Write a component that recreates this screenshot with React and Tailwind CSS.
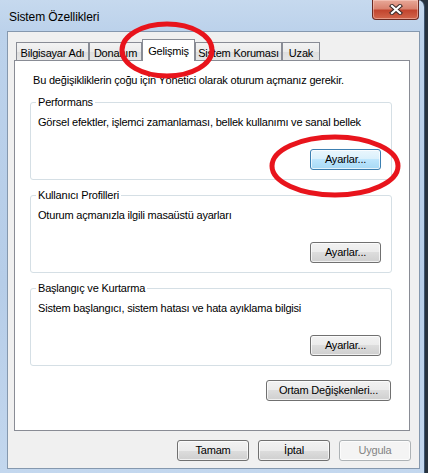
import { useState } from "react";

const tabs = [
  { label: "Bilgisayar Adı", width: "w-[73px]" },
  { label: "Donanım", width: "w-[53px]" },
  { label: "Gelişmiş", width: "w-[53px]", active: true },
  { label: "Sistem Koruması", width: "w-[87px]" },
  { label: "Uzak", width: "w-[38px]" },
];

const groups = [
  { title: "Performans", text: "Görsel efektler, işlemci zamanlaması, bellek kullanımı ve sanal bellek", focused: true },
  { title: "Kullanıcı Profilleri", text: "Oturum açmanızla ilgili masaüstü ayarları" },
  { title: "Başlangıç ve Kurtarma", text: "Sistem başlangıcı, sistem hatası ve hata ayıklama bilgisi" },
];

function Button({ children, className = "", focused, disabled }) {
  let look =
    "border-[#707070] bg-[linear-gradient(180deg,#f2f2f2_0%,#ebebeb_50%,#dddddd_50%,#cfcfcf_100%)] text-black";
  if (focused)
    look =
      "border-[#3c7fb1] bg-[linear-gradient(180deg,#eaf6fd_0%,#d9f0fc_50%,#bee6fd_50%,#a7d9f5_100%)] text-black";
  if (disabled) look = "border-[#adb2b5] bg-[#f4f4f4] text-[#838383]";

  return (
    <button
      disabled={disabled}
      className={`flex h-[21px] items-center justify-center rounded-[3px] border shadow-[inset_0_0_0_1px_rgba(255,255,255,0.7)] ${look} ${className}`}
    >
      {children}
    </button>
  );
}

function CloseButton() {
  return (
    <div className="flex h-[20px] w-[47px] items-center justify-center rounded-b-[4px] border border-t-0 border-[#6b2a22] bg-[linear-gradient(180deg,#e8a898_0%,#d98370_45%,#c2452f_55%,#d2664c_100%)] shadow-[inset_0_0_0_1px_rgba(255,220,210,0.45)]">
      <svg width="14" height="11" viewBox="0 0 14 11">
        <path d="M3 2 L11 9 M11 2 L3 9" stroke="#3b2a28" strokeWidth="4.2" strokeLinecap="square" />
        <path d="M3 2 L11 9 M11 2 L3 9" stroke="#ffffff" strokeWidth="2.2" strokeLinecap="square" />
      </svg>
    </div>
  );
}

export default function App() {
  const [tab, setTab] = useState("Gelişmiş");

  return (
    <div className="relative h-[473px] w-[428px] overflow-hidden bg-[#27323e] font-['Liberation_Sans',Arial,sans-serif] text-[11px] tracking-[-0.2px] text-black">
      {/* Window */}
      <div className="flex h-[473px] w-[425px] flex-col rounded-tr-[7px] border-r border-[#3e5570] bg-[linear-gradient(180deg,#c6d9ee_0%,#bcd2eb_30px,#b6cde8_60%,#c3d7ee_100%)]">
        {/* Title bar */}
        <div className="flex h-[31px] items-start justify-between pl-[9px] pr-[5px]">
          <span className="mt-[8px] text-[12px] tracking-[-0.1px]">Sistem Özellikleri</span>
          <CloseButton />
        </div>

        {/* Client area */}
        <div className="mb-[4px] ml-[7px] mr-[4px] flex flex-1 flex-col border border-[#8598ae] bg-[#f0f0f0] pt-[7px]">
          <div className="ml-[6px] flex flex-col">
            {/* Tabs */}
            <div className="flex h-[22px] items-end pl-[2px]">
              {tabs.map((t) =>
                t.label === tab ? (
                  <div
                    key={t.label}
                    onClick={() => setTab(t.label)}
                    className={`relative z-10 flex h-[22px] items-start justify-center border border-b-0 border-[#898c95] bg-white pt-[3px] ${t.width}`}
                  >
                    {t.label}
                  </div>
                ) : (
                  <div
                    key={t.label}
                    onClick={() => setTab(t.label)}
                    className={`mb-[1px] flex h-[18px] items-start justify-center border border-b-0 border-[#898c95] bg-[linear-gradient(180deg,#f3f3f3_0%,#ebebeb_50%,#dedede_50%,#e6e6e6_100%)] pt-[2px] ${t.width}`}
                  >
                    {t.label}
                  </div>
                )
              )}
            </div>

            {/* Tab page */}
            <div className="-mt-px flex h-[371px] w-[396px] flex-col border border-[#898c95] bg-white">
              <p className="ml-[18px] mt-[12px] leading-[15px]">
                Bu değişikliklerin çoğu için Yönetici olarak oturum açmanız gerekir.
              </p>

              {groups.map((g, i) => (
                <fieldset
                  key={g.title}
                  className={`ml-[15px] flex h-[85px] w-[362px] flex-col rounded-[3px] border border-[#d5dfe5] px-[5px] ${i === 0 ? "mt-[7px]" : "mt-[8px]"}`}
                >
                  <legend className="px-[2px] leading-[15px]">{g.title}</legend>
                  <p className="ml-[2px] mt-[5px] leading-[15px]">{g.text}</p>
                  <div className="mt-[19px] flex justify-end pr-[5px]">
                    <Button focused={g.focused} className="w-[71px]">
                      Ayarlar...
                    </Button>
                  </div>
                </fieldset>
              ))}

              <div className="mr-[18px] mt-[14px] flex justify-end">
                <Button className="w-[125px]">Ortam Değişkenleri...</Button>
              </div>
            </div>
          </div>

          {/* Dialog buttons */}
          <div className="mr-[8px] mt-[9px] flex justify-end gap-[9px]">
            <Button className="w-[72px]">Tamam</Button>
            <Button className="w-[72px]">İptal</Button>
            <Button className="w-[72px]" disabled>
              Uygula
            </Button>
          </div>
        </div>
      </div>

      {/* Red annotation marks drawn over the screenshot */}
      <svg className="pointer-events-none absolute inset-0" width="428" height="473" viewBox="0 0 428 473">
        <ellipse cx="167" cy="50" rx="45" ry="26" fill="none" stroke="#e8141c" strokeWidth="5" />
        <ellipse cx="335" cy="166" rx="63" ry="29" fill="none" stroke="#e8141c" strokeWidth="5" />
      </svg>
    </div>
  );
}
